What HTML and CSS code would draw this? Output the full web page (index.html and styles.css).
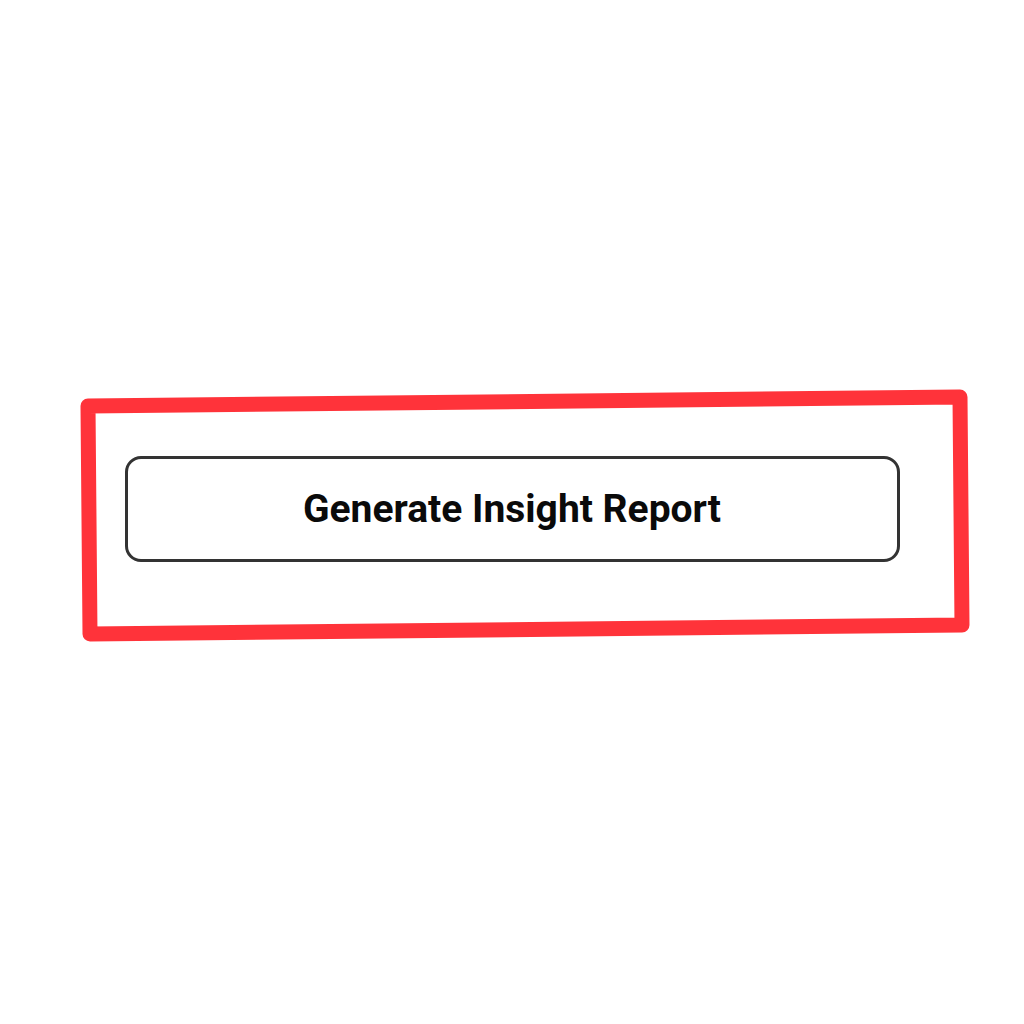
FILE: index.html
```html
<!DOCTYPE html>
<html lang="en">
<head>
    <meta charset="UTF-8">
    <meta name="viewport" content="width=device-width, initial-scale=1.0">
    <title>Generate Insight Report</title>
    <link rel="stylesheet" href="styles.css">
</head>
<body>

    <div class="page">
        <div class="action-area">
            <button class="report-button" type="button">Generate Insight Report</button>
        </div>
    </div>

    <!-- Highlight marker drawn over the action area -->
    <svg class="highlight" width="1024" height="1024" viewBox="0 0 1024 1024">
        <polygon points="88,406 960,397 962,625 90,634"
                 fill="none" stroke="#ff333a" stroke-width="15" stroke-linejoin="round"/>
    </svg>

</body>
</html>
```

FILE: styles.css
```css
* {
    margin: 0;
    padding: 0;
    box-sizing: border-box;
}

body {
    font-family: Roboto, 'Liberation Sans', sans-serif;
    background: #fff;
    color: #111;
    width: 1024px;
    height: 1024px;
    overflow: hidden;
}

.page {
    display: flex;
    justify-content: center;
    padding-top: 456px;
}

.action-area {
    width: 775px;
}

.report-button {
    display: block;
    width: 100%;
    height: 106px;
    font-family: Roboto, 'Liberation Sans', sans-serif;
    font-size: 39px;
    font-weight: 700;
    color: #0a0a0a;
    background: #fff;
    border: 3px solid #333;
    border-radius: 16px;
    cursor: pointer;
}

.highlight {
    position: absolute;
    top: 0;
    left: 0;
    pointer-events: none;
}
```
